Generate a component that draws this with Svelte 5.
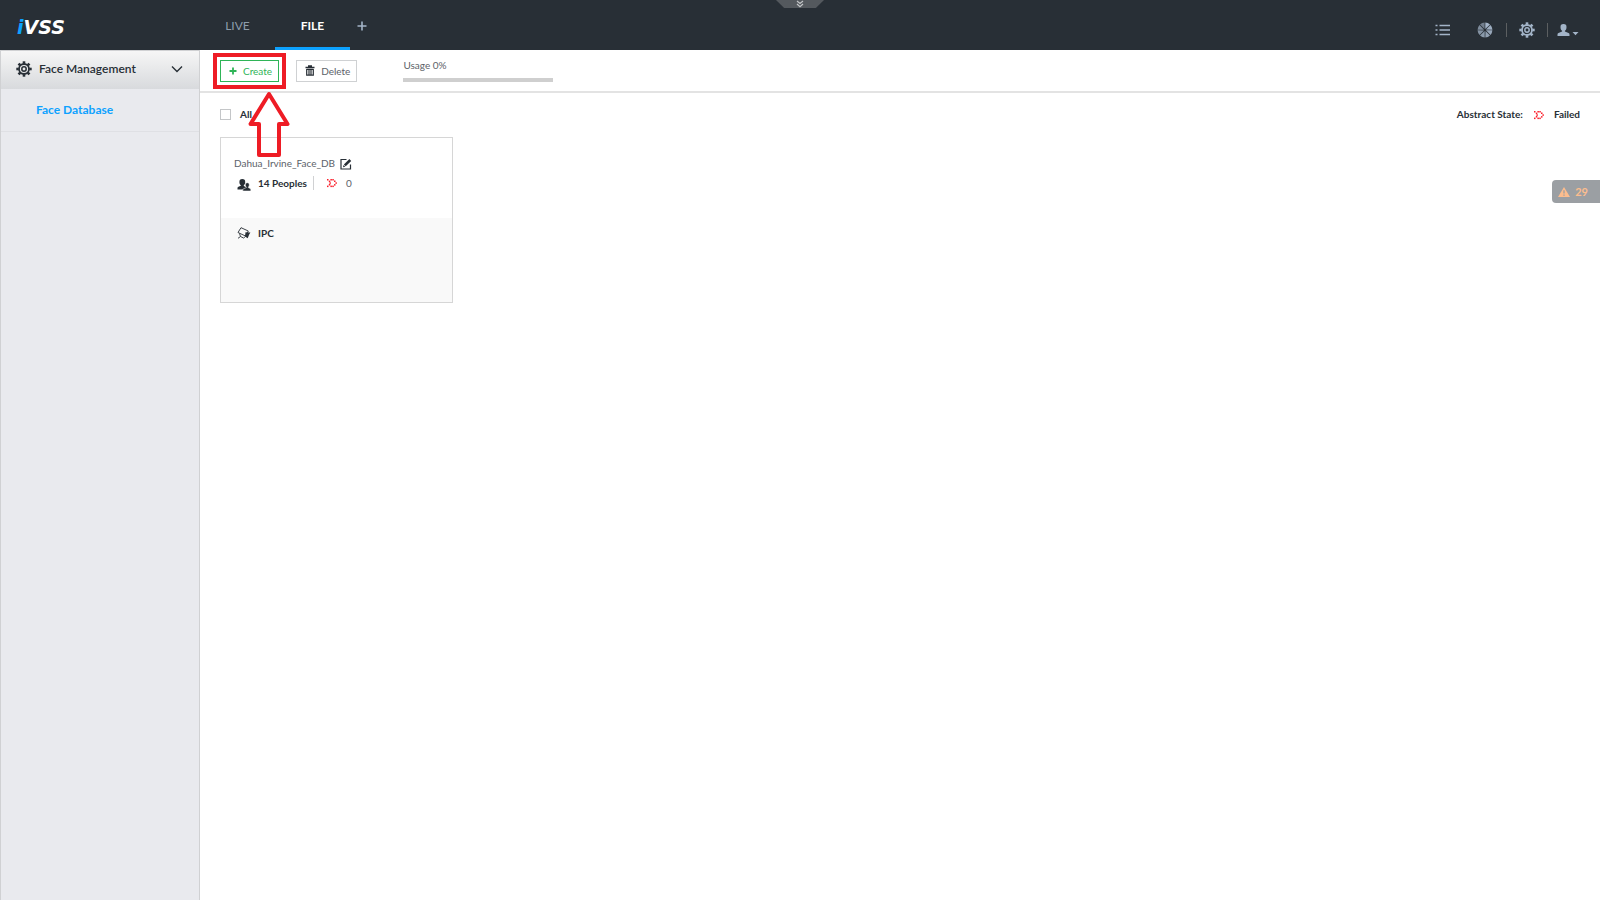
<script>
    let tabs = [
        {id: 'live', title: 'LIVE'},
        {id: 'file', title: 'FILE'},
    ];
    let active_tab = 'file';
    let menu_open = true;
    let all_checked = false;

    const usage = 0;
    const alarms = 29;

    let databases = [
        {name: 'Dahua_Irvine_Face_DB', people: 14, failed: 0, device: 'IPC'},
    ];

    // teeth of the gear and slices of the disk icon
    const teeth = [0, 45, 90, 135, 180, 225, 270, 315];
    const slice_opacity = [1, 0.95, 0.9, 0.85, 0.8, 0.75, 0.7, 0.6];

    // dots of the failed icon, top left corners
    const dots = [
        [0, 1], [1.8, 2.6], [2.4, 4.3], [1.8, 6], [0, 7.6],
        [3.4, 1], [5.3, 1], [7, 2.5], [8.4, 4.3], [7, 6.1], [5.3, 7.6], [3.4, 7.6],
    ];
</script>

{#snippet gear()}
    <svg width="16" height="16" viewBox="0 0 16 16" fill="none" stroke="currentColor" aria-hidden="true">
        <circle cx="8" cy="8" r="5" stroke-width="1.8" />
        <circle cx="8" cy="8" r="2.2" stroke-width="1.5" />
        {#each teeth as angle}
            <path d="M6.7 1.5h2.6" stroke-width="2.4" transform="rotate({angle} 8 8)" />
        {/each}
    </svg>
{/snippet}

{#snippet failed_icon()}
    <svg width="10" height="10" viewBox="0 0 10 10" fill="#fa1f2b" aria-hidden="true">
        {#each dots as [x, y]}
            <rect {x} {y} width="1.5" height="1.5" />
        {/each}
    </svg>
{/snippet}

<div class="page">
    <header>
        <div class="brand"><span>i</span>VSS</div>
        <nav class="tabs">
            {#each tabs as tab (tab.id)}
                <button class="tab" class:active={tab.id === active_tab}
                    on:click={() => active_tab = tab.id}>{tab.title}</button>
            {/each}
            <button class="add" aria-label="Add tab">
                <svg width="10" height="10" viewBox="0 0 10 10" stroke="currentColor" stroke-width="1.6"><path d="M5 0.5v9M0.5 5h9" /></svg>
            </button>
        </nav>
        <button class="pull" aria-label="Expand">
            <svg width="8" height="8" viewBox="0 0 8 8" fill="none" stroke="#c3c6c8" stroke-width="1.2"><path d="M1 1l3 2.4L7 1M1 4l3 2.6L7 4" /></svg>
        </button>
        <div class="tools">
            <button aria-label="Tasks">
                <svg width="16" height="16" viewBox="0 0 16 16" stroke="currentColor" stroke-width="1.6">
                    <path d="M0.5 3.5h2M0.5 8h2M0.5 12.5h2M4.5 3.5H15M4.5 8H15M4.5 12.5H15" />
                </svg>
            </button>
            <button class="disk" aria-label="System info">
                <svg width="16" height="16" viewBox="0 0 16 16" fill="currentColor">
                    {#each slice_opacity as opacity, i}
                        <path d="M8.3 7V0.6A7.4 7.4 0 0 1 13 2.5z" {opacity} transform="rotate({i * 45} 8 8)" />
                    {/each}
                </svg>
            </button>
            <i class="sep"></i>
            <button aria-label="Settings">{@render gear()}</button>
            <i class="sep"></i>
            <button aria-label="User">
                <svg width="22" height="16" viewBox="0 0 22 16" fill="currentColor">
                    <path d="M6.5 2a3 3 0 0 1 3 3.2c0 1.6-.7 3-1.6 3.5v.8l3.6 1.6c.7.3 1 .8 1 1.4V14H.5v-1.5c0-.6.3-1.1 1-1.4l3.6-1.6v-.8C4.2 8.2 3.5 6.8 3.5 5.2A3 3 0 0 1 6.5 2z" />
                    <path d="M15.5 10h6l-3 3.3z" />
                </svg>
            </button>
        </div>
    </header>

    <div class="body">
        <aside>
            <button class="menu-head" on:click={() => menu_open = !menu_open}>
                {@render gear()}
                <span>Face Management</span>
                <svg width="12" height="8" viewBox="0 0 12 8" fill="none" stroke="currentColor" stroke-width="1.4"><path d="M1 1.5l5 5 5-5" /></svg>
            </button>
            {#if menu_open}
                <a class="menu-item" href="#face-database">Face Database</a>
            {/if}
        </aside>

        <main>
            <div class="toolbar">
                <div class="callout">
                    <button class="btn create">
                        <svg width="8" height="8" viewBox="0 0 8 8" stroke="currentColor" stroke-width="1.8"><path d="M4 0.5v7M0.5 4h7" /></svg>
                        Create
                    </button>
                    <svg class="arrow" width="42" height="66" viewBox="0 0 42 66" fill="none" stroke="#ee1c25" stroke-width="4" stroke-linejoin="round">
                        <path d="M21 3 39.5 33H31V64H11V33H2.5z" />
                    </svg>
                </div>
                <button class="btn">
                    <svg width="10" height="11" viewBox="0 0 10 11" fill="none" stroke="#282f36">
                        <path d="M0.5 2.5h9M3 1h4" stroke-width="1.4" />
                        <path d="M1.7 4v6.2h6.6V4M4 4v6M6 4v6M1.7 4.4h6.6" stroke-width="1.2" />
                    </svg>
                    Delete
                </button>
                <div class="usage">
                    <span>Usage {usage}%</span>
                    <div class="bar"><div style="width: {usage}%"></div></div>
                </div>
            </div>

            <div class="filter">
                <label>
                    <input type="checkbox" bind:checked={all_checked}>
                    All
                </label>
                <div class="state">
                    <span>Abstract State:</span>
                    {@render failed_icon()}
                    <span>Failed</span>
                </div>
            </div>

            <div class="cards">
                {#each databases as db (db.name)}
                    <section class="card">
                        <div class="info">
                            <div class="name">
                                {db.name}
                                <button aria-label="Edit">
                                    <svg width="12" height="12" viewBox="0 0 12 12" fill="none" stroke="#282f36">
                                        <path d="M6.5 1.5H1v9.5h9.5V6.5" stroke-width="1.2" />
                                        <path d="M4.8 7.4 10.3 2" stroke-width="2.6" />
                                        <path d="M3 9.3l.5-2.3 1.8 1.7z" fill="#282f36" stroke="none" />
                                    </svg>
                                </button>
                            </div>
                            <div class="counts">
                                <svg width="14" height="12" viewBox="0 0 14 12" fill="#282f36" aria-hidden="true">
                                    <path d="M5.3 0a3 3 0 0 1 2.9 3.2c0 1.4-.6 2.5-1.4 3v.8l2.4 1.2V10.5H.5V8.9c0-.6.3-.9.9-1.1l2.4-1v-.6C3 5.7 2.4 4.6 2.4 3.2A3 3 0 0 1 5.3 0z" />
                                    <path d="M10.3 3.7a2 2 0 0 1 2 2.2c0 1-.4 1.7-1 2.1v.6l1.7.8c.5.2.8.5.8 1V12H5.8v-1.8l3.500-1.600V8c-.6-.4-1-1.100-1-2.100a2 2 0 0 1 2-2.200z" stroke="#fff" stroke-width="0.5" />
                                </svg>
                                <strong>{db.people} Peoples</strong>
                                <i></i>
                                {@render failed_icon()}
                                <span>{db.failed}</span>
                            </div>
                        </div>
                        <div class="device">
                            <svg width="14" height="12" viewBox="0 0 14 12" fill="none" stroke="#282f36" aria-hidden="true">
                                <path d="M4 .7 11.3 4 8.5 9 1 5.5zM2.5 6.5 3.5 9.5 1 11.3M3.5 9.5 6.5 11l2-1.5" stroke-width="0.9" />
                                <path d="M8.5 5.3l4.9.3-1.2 2-1.5 3.6-2.7-1.7z" fill="#282f36" stroke="none" />
                            </svg>
                            <strong>{db.device}</strong>
                        </div>
                    </section>
                {/each}
            </div>
        </main>
    </div>

    <button class="alarm">
        <svg width="12" height="10" viewBox="0 0 12 10" fill="#fcbd8e" aria-hidden="true">
            <path d="M6 0 12 10H0z" />
            <path d="M6 3.2v3.3M6 7.5v1.3" stroke="#9b9fa3" stroke-width="1.3" />
        </svg>
        {alarms}
    </button>
</div>

<style>
    :global(body) {
        margin: 0;
    }
    .page {
        display: flex;
        flex-direction: column;
        min-height: 100vh;
        position: relative;
        font: 10px/16px Lato, sans-serif;
        color: #282f36;
        background: #fff;
    }
    button {
        font: inherit;
        color: inherit;
        background: none;
        border: none;
        padding: 0;
        cursor: pointer;
    }
    svg {
        display: block;
        flex: none;
    }
    header {
        display: flex;
        height: 50px;
        position: relative;
        background: #282f36;
        color: #a3b4c8;
    }
    .brand {
        width: 183px;
        padding-left: 17px;
        font: italic bold 19px/54px "DejaVu Sans", sans-serif;
        color: #fff;
    }
    .brand span {
        color: #0da2ff;
    }
    .tabs {
        display: flex;
        flex: 1;
    }
    .tab {
        width: 75px;
        padding-top: 5px;
        border-bottom: 3px solid transparent;
        font-size: 12px;
        color: #8e9dab;
    }
    .tab.active {
        border-color: #0da2ff;
        color: #fff;
        font-weight: bold;
    }
    .add {
        display: flex;
        align-items: center;
        justify-content: center;
        width: 24px;
        padding-top: 2px;
    }
    .pull {
        position: absolute;
        top: 0;
        left: 50%;
        width: 48px;
        height: 8px;
        margin-left: -24px;
        background: #54595e;
        clip-path: polygon(0 0, 100% 0, 83% 100%, 17% 100%);
    }
    .pull svg {
        margin: 0 auto;
    }
    .tools {
        display: flex;
        align-items: center;
        padding: 10px 21px 0 0;
    }
    .disk {
        margin: 0 13px 0 26px;
    }
    .sep {
        width: 1px;
        height: 14px;
        background: #5c5f61;
    }
    .sep + button {
        margin: 0 12px;
    }
    .sep + button:last-child {
        margin: 0 0 0 9px;
    }
    .body {
        display: flex;
        flex: 1;
    }
    aside {
        box-sizing: border-box;
        width: 200px;
        border: 1px solid #d0d1d3;
        border-width: 1px 1px 0;
        background: #e9eaee;
    }
    .menu-head {
        display: flex;
        align-items: center;
        gap: 7px;
        width: 100%;
        height: 38px;
        padding: 0 16px 2px 15px;
        background: linear-gradient(#f6f6f6, #d8dadd);
        font-size: 12px;
        font-weight: 600;
        text-align: left;
    }
    .menu-head span {
        flex: 1;
    }
    .menu-item {
        display: block;
        padding: 13px 0 13px 35px;
        border-bottom: 1px solid #dfe0e4;
        font-size: 12px;
        font-weight: bold;
        color: #0da2ff;
        text-decoration: none;
    }
    main {
        flex: 1;
    }
    .toolbar {
        display: flex;
        align-items: flex-start;
        padding: 3px 13px 2px;
        border-bottom: 2px solid #e3e3e3;
    }
    .callout {
        position: relative;
        padding: 3px;
        border: 4px solid #ee1c25;
    }
    .arrow {
        position: absolute;
        top: 34px;
        left: 31px;
        z-index: 1;
    }
    .btn {
        display: flex;
        align-items: center;
        gap: 6px;
        height: 22px;
        padding: 0 6px 1px 8px;
        border: 1px solid #cfd1d3;
        color: #5c6269;
    }
    .btn.create {
        border-color: #2fb457;
        color: #2fb457;
    }
    .callout + .btn {
        margin: 7px 46px 0 10px;
    }
    .usage {
        padding-top: 4px;
        color: #5c6269;
    }
    .bar {
        width: 150px;
        height: 4px;
        margin-top: 5px;
        background: #cfcfcf;
    }
    .bar div {
        height: 100%;
        background: #0da2ff;
    }
    .filter {
        display: flex;
        justify-content: space-between;
        padding: 13px 20px 15px;
        font-weight: bold;
    }
    label, .state {
        display: flex;
        align-items: center;
    }
    label {
        gap: 9px;
    }
    input {
        appearance: none;
        width: 11px;
        height: 11px;
        margin: 0;
        border: 1px solid #c4c6c8;
    }
    input:checked {
        background: #0da2ff;
    }
    .state svg {
        margin: 2px 10px 0 11px;
    }
    .cards {
        display: flex;
        flex-wrap: wrap;
        gap: 20px;
        padding: 0 20px;
    }
    .card {
        box-sizing: border-box;
        width: 233px;
        border: 1px solid #d6d6d6;
    }
    .info {
        height: 63px;
        padding: 17px 13px 0;
        color: #5c6269;
    }
    .name {
        display: flex;
        align-items: center;
        gap: 5px;
    }
    .name button {
        padding-top: 2px;
    }
    .counts, .device {
        display: flex;
        padding-left: 3px;
    }
    .counts {
        align-items: center;
        margin-top: 4px;
    }
    .counts svg:first-child {
        margin-top: 3px;
    }
    strong {
        margin-left: 7px;
        color: #282f36;
    }
    .counts i {
        width: 1px;
        height: 14px;
        margin: 0 13px 0 6px;
        background: #d0d1d3;
    }
    .counts span {
        margin-left: 9px;
    }
    .device {
        height: 77px;
        padding: 7px 16px 0;
        background: #f9f9f9;
    }
    .device svg {
        margin-top: 2px;
    }
    .alarm {
        display: flex;
        align-items: center;
        gap: 5px;
        position: absolute;
        top: 180px;
        right: 0;
        height: 23px;
        padding: 0 12px 0 6px;
        border-radius: 4px 0 0 4px;
        background: #9b9fa3;
        color: #fcbd8e;
        font-size: 11px;
        font-weight: bold;
    }
</style>
